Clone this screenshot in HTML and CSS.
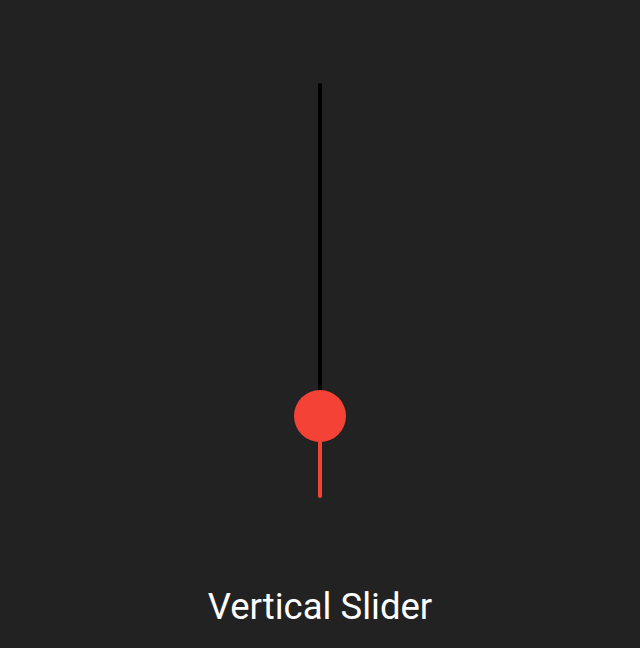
FILE: index.html
```html
<!DOCTYPE html>
<html>
<head>
<meta charset="utf-8">
<link rel="stylesheet" href="styles.css">
</head>
<body>
<div class="page">
  <div class="slider">
    <div class="track-rest"></div>
    <div class="track-fill"></div>
    <div class="thumb"></div>
  </div>
  <div class="label">Vertical Slider</div>
</div>
</body>
</html>
```
FILE: styles.css
```css
html, body {
  margin: 0;
  padding: 0;
  background: #222222;
}
.page {
  width: 640px;
  height: 648px;
  display: flex;
  flex-direction: column;
  align-items: center;
  padding-top: 83px;
  box-sizing: border-box;
}
.slider {
  position: relative;
  width: 4px;
  height: 415px;
  display: flex;
  flex-direction: column;
}
.track-rest {
  flex: 1;
  background: #000000;
  border-radius: 2px 2px 0 0;
}
.track-fill {
  height: 82px;
  background: #f44336;
  border-radius: 0 0 2px 2px;
}
.thumb {
  position: absolute;
  left: 50%;
  bottom: 82px;
  width: 52px;
  height: 52px;
  margin-left: -26px;
  margin-bottom: -26px;
  border-radius: 50%;
  background: #f44336;
}
.label {
  margin-top: 88px;
  font-family: Roboto, "Noto Sans", sans-serif;
  font-size: 36.5px;
  line-height: 42px;
  color: #ffffff;
}
```
